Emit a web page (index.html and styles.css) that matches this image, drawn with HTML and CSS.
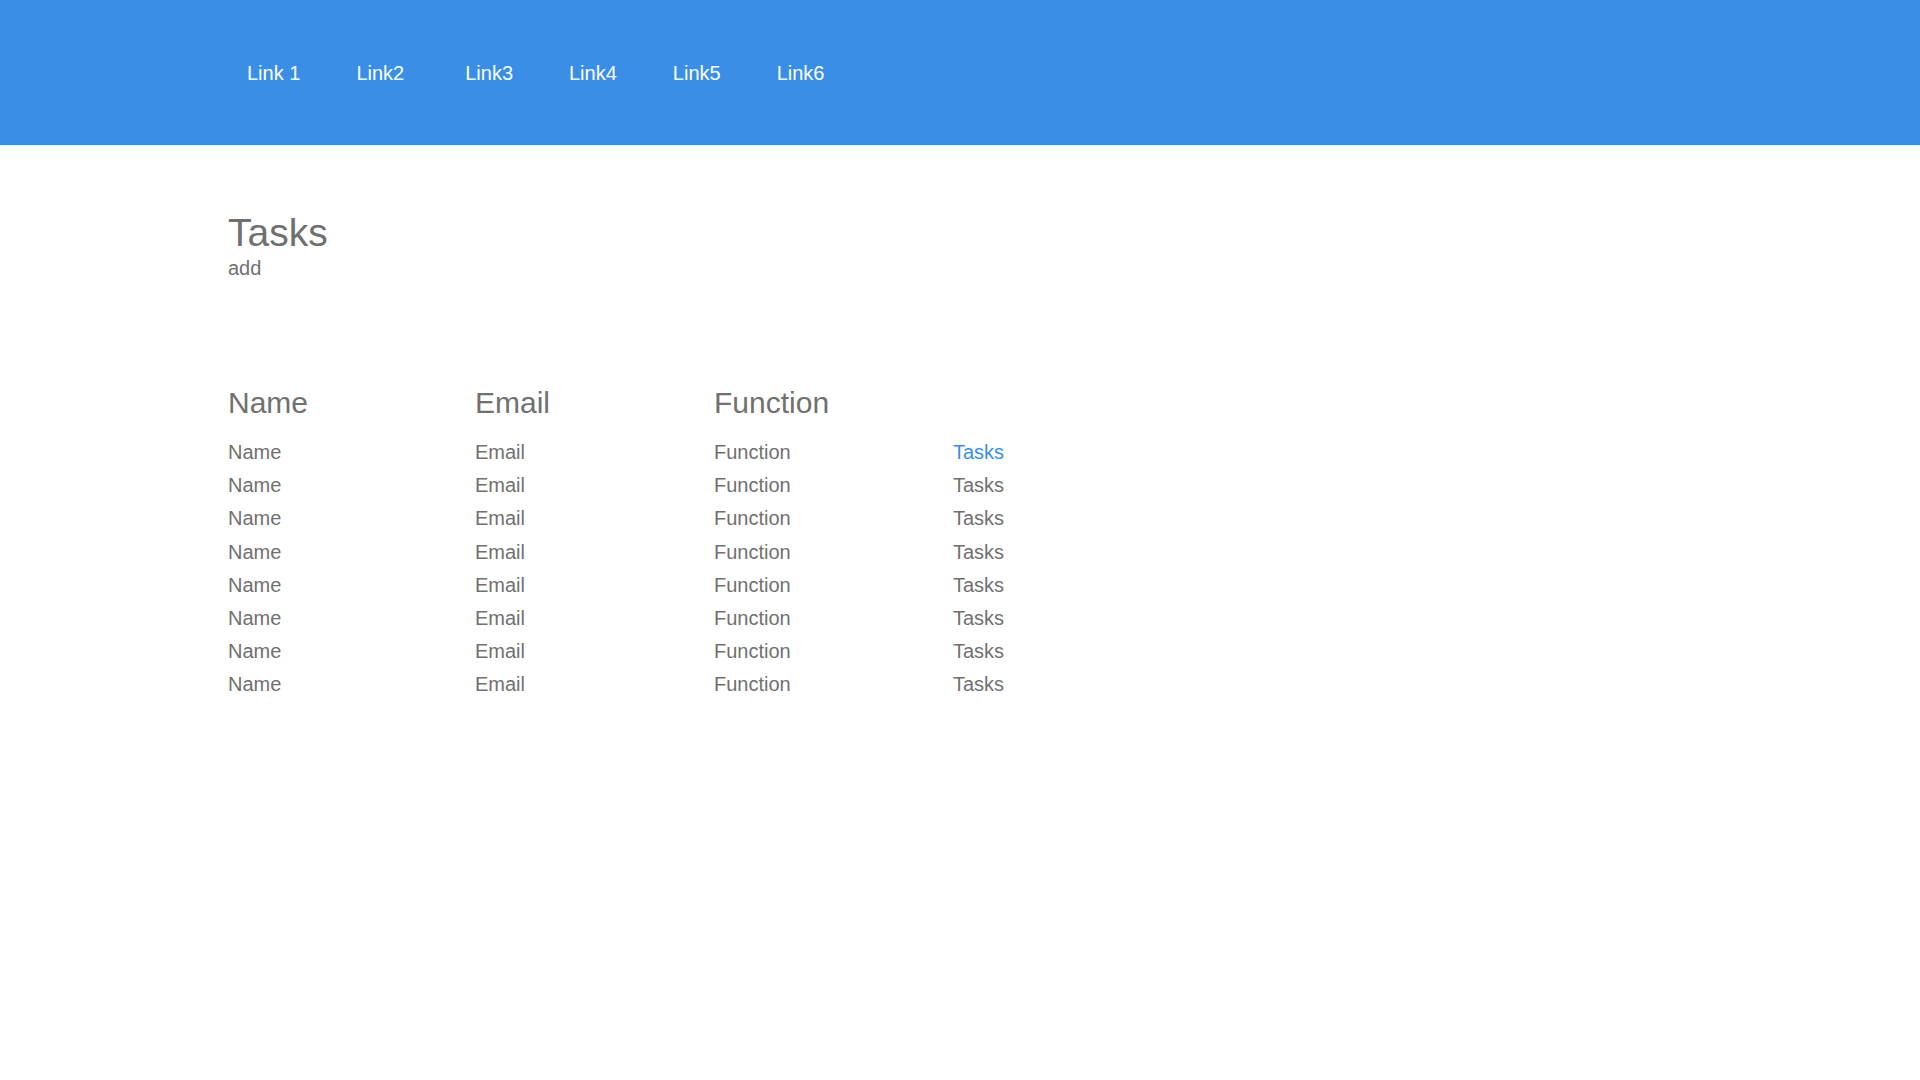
FILE: index.html
```html
<!DOCTYPE html>
<html lang="en">
<head>
<meta charset="utf-8">
<title>Tasks</title>
<link rel="stylesheet" href="styles.css">
</head>
<body>
<header class="topbar">
  <nav class="nav">
    <a class="nav-link" href="#">Link 1</a>
    <a class="nav-link" href="#">Link2</a>
    <a class="nav-link nav-link-wide" href="#">Link3</a>
    <a class="nav-link" href="#">Link4</a>
    <a class="nav-link" href="#">Link5</a>
    <a class="nav-link" href="#">Link6</a>
  </nav>
</header>
<main class="content">
  <h1 class="title">Tasks</h1>
  <div class="subtitle">add</div>
  <div class="table">
    <div class="row row-head">
      <div>Name</div><div>Email</div><div>Function</div><div></div>
    </div>
    <div class="rows">
      <div class="row"><div>Name</div><div>Email</div><div>Function</div><div class="tasks tasks-active">Tasks</div></div>
      <div class="row"><div>Name</div><div>Email</div><div>Function</div><div class="tasks">Tasks</div></div>
      <div class="row"><div>Name</div><div>Email</div><div>Function</div><div class="tasks">Tasks</div></div>
      <div class="row"><div>Name</div><div>Email</div><div>Function</div><div class="tasks">Tasks</div></div>
      <div class="row"><div>Name</div><div>Email</div><div>Function</div><div class="tasks">Tasks</div></div>
      <div class="row"><div>Name</div><div>Email</div><div>Function</div><div class="tasks">Tasks</div></div>
      <div class="row"><div>Name</div><div>Email</div><div>Function</div><div class="tasks">Tasks</div></div>
      <div class="row"><div>Name</div><div>Email</div><div>Function</div><div class="tasks">Tasks</div></div>
    </div>
  </div>
</main>
</body>
</html>
```

FILE: styles.css
```css
* { box-sizing: border-box; }

html, body {
  margin: 0;
  padding: 0;
  background: #ffffff;
  font-family: "Liberation Sans", Arial, Helvetica, sans-serif;
  color: #707070;
}

.topbar {
  height: 145px;
  background: #3a8ee6;
  display: flex;
  align-items: center;
}

.nav {
  display: flex;
  align-items: center;
  gap: 56px;
  padding-left: 247px;
}

.nav-link {
  color: #ffffff;
  text-decoration: none;
  font-size: 20px;
  line-height: 24px;
}

.nav-link-wide {
  margin-left: 5px;
}

.content {
  padding-left: 228px;
}

.title {
  margin: 66px 0 0 0;
  font-size: 39px;
  font-weight: normal;
  line-height: 43px;
  color: #707070;
}

.subtitle {
  margin-top: 2px;
  font-size: 20px;
  line-height: 24px;
}

.table {
  margin-top: 105px;
}

.row {
  display: grid;
  grid-template-columns: 247px 239px 239px auto;
  font-size: 20px;
  line-height: 33.2px;
}

.row-head {
  font-size: 30px;
  line-height: 36px;
}

.rows {
  margin-top: 15px;
}

.tasks-active {
  color: #3a8ee6;
}
```
